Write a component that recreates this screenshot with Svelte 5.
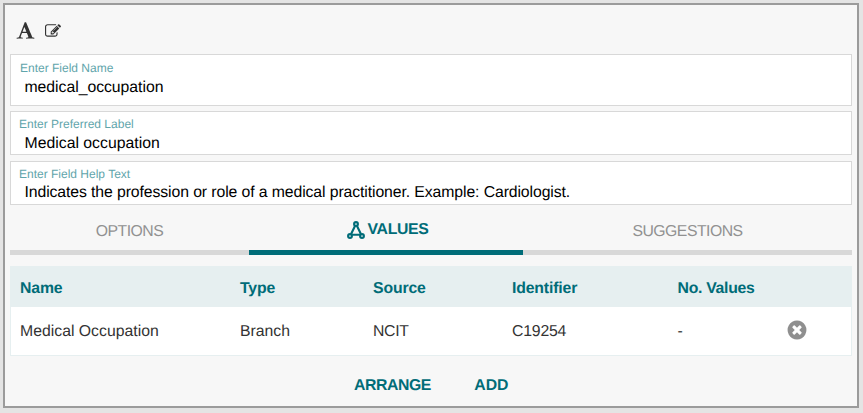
<script>
  const fields = [
    { label: 'Enter Field Name', value: 'medical_occupation', kind: 'name' },
    { label: 'Enter Preferred Label', value: 'Medical occupation', kind: 'preferred' },
    { label: 'Enter Field Help Text', value: 'Indicates the profession or role of a medical practitioner. Example: Cardiologist.', kind: 'help' }
  ];
  const columns = ['Name', 'Type', 'Source', 'Identifier', 'No. Values'];
  const row = ['Medical Occupation', 'Branch', 'NCIT', 'C19254', '-'];
</script>

<main class="panel">
  <div class="toolbar">
    <svg class="font-icon" viewBox="0 0 1792 1792" aria-hidden="true"><path d="M789 559l-170 450q33 0 136.5 2t160.5 2q19 0 57-2-87-253-184-452zm-725 1105l2-79q23-7 56-12.5t57-10.5 49.5-14.5 44.5-29 31-50.5l237-616 280-724h128q8 14 11 21l205 480q33 78 106 257.5t114 274.5q15 34 58 144.5t72 168.5q20 45 35 57 19 15 88 29.5t84 20.5q6 38 6 57 0 5-.5 13.5t-.5 12.5q-63 0-190-8t-191-8q-76 0-215 7t-178 8q0-43 4-78l131-28q1 0 12.5-2.5t15.5-3.5 14.5-4.5 15-6.5 11-8 9-11 2.5-14q0-16-31-96.5t-72-177.5-42-100l-450-2q-26 58-76.5 195.5t-50.5 162.5q0 22 14 37.5t43.5 24.5 48.5 13.5 57 8.5 41 4q1 19 1 58 0 9-2 27-58 0-174.5-10t-174.5-10q-8 0-26.5 4t-21.5 4q-80 14-188 14z" /></svg>
    <svg class="edit-icon" viewBox="0 0 1792 1792" aria-hidden="true"><path d="M888 1184l116-116-152-152-116 116v56h96v96h56zm440-720q-16-16-33 1l-350 350q-17 17-1 33t33-1l350-350q17-17 1-33zm80 594v190q0 119-84.5 203.5t-203.5 84.5h-832q-119 0-203.5-84.5t-84.5-203.5v-832q0-119 84.5-203.5t203.5-84.5h832q63 0 117 25 15 7 18 23 3 17-9 29l-49 49q-14 14-32 8-23-6-45-6h-832q-66 0-113 47t-47 113v832q0 66 47 113t113 47h832q66 0 113-47t47-113v-126q0-13 9-22l64-64q15-15 35-7t20 29zm-96-738l288 288-672 672h-288v-288zm444 132l-92 92-288-288 92-92q28-28 68-28t68 28l152 152q28 28 28 68t-28 68z" /></svg>
  </div>

  {#each fields as field}
    <div class="field {field.kind}">
      <div class="label">{field.label}</div>
      <div class="value">{field.value}</div>
    </div>
  {/each}

  <nav class="tabs">
    <div class="tab options"><span>OPTIONS</span></div>
    <div class="tab values active">
      <svg viewBox="0 0 18 18" aria-hidden="true">
        <g fill="none" stroke="currentColor" stroke-width="2.1">
          <circle cx="9" cy="3" r="1.9" />
          <circle cx="3" cy="15" r="1.9" />
          <circle cx="15" cy="15" r="1.9" />
          <path d="M8 5 4.1 13M10 5l3.9 8M5.1 13.8h7.8" />
        </g>
      </svg>
      <span>VALUES</span>
    </div>
    <div class="tab suggestions"><span>SUGGESTIONS</span></div>
  </nav>

  <section class="table">
    <div class="row head">
      {#each columns as column}<div>{column}</div>{/each}
      <div></div>
    </div>
    <div class="row body">
      {#each row as cell}<div>{cell}</div>{/each}
      <div class="remove">
        <svg viewBox="0 0 1792 1792" aria-hidden="true"><path d="M1277 1122q0-26-19-45l-181-181 181-181q19-19 19-45 0-27-19-46l-90-90q-19-19-46-19-26 0-45 19l-181 181-181-181q-19-19-45-19-27 0-46 19l-90 90q-19 19-19 46 0 26 19 45l181 181-181 181q-19 19-19 45 0 27 19 46l90 90q19 19 46 19 26 0 45-19l181-181 181 181q19 19 45 19 27 0 46-19l90-90q19-19 19-46zm387-226q0 209-103 385.5t-279.5 279.5-385.5 103-385.5-103-279.5-279.5-103-385.5 103-385.5 279.5-279.5 385.5-103 385.5 103 279.5 279.5 103 385.5z" /></svg>
      </div>
    </div>
  </section>

  <footer class="actions"><span class="arrange">ARRANGE</span><span class="add">ADD</span></footer>
</main>

<style>
  :global(body) { background: #e4e4e4; }
  .panel {
    box-sizing: border-box;
    width: 856px;
    height: 405px;
    margin: 3px 0 0 3px;
    padding: 0 5px;
    border: 2px solid #9b9b9b;
    background: #f7f7f7;
    font: 15.8px/20px "Liberation Sans", Arial, sans-serif;
    text-rendering: geometricPrecision;
    color: #333;
    white-space: nowrap;
    display: flow-root;
  }
  svg { display: block; flex: none; fill: currentColor; }
  .toolbar { display: flex; height: 49px; padding-left: 6px; box-sizing: border-box; }
  .font-icon { width: 19px; height: 19px; margin-top: 16px; }
  .edit-icon { width: 16px; height: 16px; margin: 18px 0 0 9.7px; }
  .field {
    box-sizing: border-box;
    height: 44px;
    padding: 4px 0 0 8px;
    margin-bottom: 6px;
    border: 1px solid #d8d8d8;
    background: #fff;
    color: #000;
  }
  .label { font-size: 12px; line-height: 16px; color: #5fa5ab; }
  .value { padding: 2px 0 0 5.5px; line-height: 20px; }
  .name { height: 52px; padding: 5px 0 0 9px; margin-bottom: 5px; }
  .name .value { padding: 2px 0 0 4.5px; letter-spacing: -0.04px; }
  .help { margin-bottom: 0; }
  .help .value { margin-top: -1px; letter-spacing: -0.103px; }
  .tabs { display: grid; grid-template-columns: 239px 274px 329px; height: 50px; }
  .tab {
    display: flex;
    justify-content: center;
    align-items: center;
    border-bottom: 5px solid #d8d8d8;
    color: #919191;
    letter-spacing: -0.52px;
  }
  .tab span { padding-top: 8px; }
  .active { border-color: #006c78; color: #006c78; font-weight: bold; gap: 3px; letter-spacing: -0.35px; padding-left: 3px; }
  .active span { padding-top: 4px; }
  .active svg { width: 18px; height: 18px; margin-top: 4px; }
  .table { box-sizing: border-box; height: 90px; margin-top: 11px; border: 1px solid #e6eff0; background: #fff; }
  .row { display: grid; grid-template-columns: 220px 133px 139px 165.5px 110px 1fr; padding-left: 9px; align-items: center; }
  .head { height: 40px; background: #e6eff0; color: #006c78; font-weight: bold; letter-spacing: -0.15px; }
  .head div { padding-top: 3px; }
  .head div:nth-child(5) { letter-spacing: -0.28px; }
  .body { height: 48px; }
  .body div { padding-top: 2px; }
  .body div:nth-child(3) { letter-spacing: -0.3px; }
  .body div:nth-child(4) { letter-spacing: -0.2px; }
  .body .remove { padding: 0; color: #8f8f8f; }
  .remove svg { width: 22px; height: 22px; margin: -2px 0 0 -2px; }
  .actions { display: flex; padding: 20px 0 0 344px; gap: 43.5px; color: #006c78; font-weight: bold; letter-spacing: -0.43px; }
  .add { letter-spacing: -0.1px; }
</style>
